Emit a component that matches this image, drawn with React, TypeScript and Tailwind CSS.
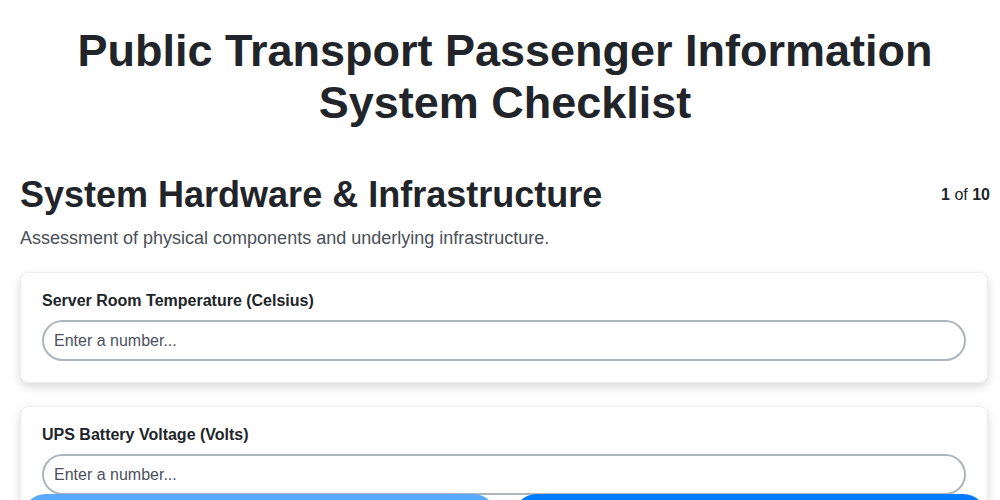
import React, { useState } from 'react';

interface Field {
  id: string;
  label: string;
}

const fields: Field[] = [
  { id: 'server-temp', label: 'Server Room Temperature (Celsius)' },
  { id: 'ups-voltage', label: 'UPS Battery Voltage (Volts)' },
];

const App: React.FC = () => {
  const [values, setValues] = useState<Record<string, string>>({});
  const step = 1;
  const total = 10;

  return (
    <div className="min-h-screen bg-white font-['Liberation_Sans',Arial,sans-serif] text-[#212529]">
      <div className="pl-5 pr-[10px] pt-[25px] pb-24">
        <h1 className="text-center text-[45px] font-bold leading-[52px]">
          Public Transport Passenger Information
          <br />
          System Checklist
        </h1>

        <div className="mt-[39px] flex items-center justify-between">
          <h2 className="text-[36px] font-bold">System Hardware &amp; Infrastructure</h2>
          <span className="text-base">
            <b>{step}</b> of <b>{total}</b>
          </span>
        </div>
        <p className="mt-[3px] text-[18px] text-[#495057]">
          Assessment of physical components and underlying infrastructure.
        </p>

        <div className="mt-5 mr-[2px] flex flex-col gap-[23px]">
          {fields.map(f => (
            <div
              key={f.id}
              className="rounded-lg border border-[#eceef1] bg-white px-[21px] pt-4 pb-[21px] shadow-[0_4px_10px_rgba(0,0,0,0.15)]"
            >
              <label htmlFor={f.id} className="block text-base font-bold text-[#212529]">
                {f.label}
              </label>
              <input
                id={f.id}
                type="number"
                placeholder="Enter a number..."
                value={values[f.id] ?? ''}
                onChange={e => setValues({ ...values, [f.id]: e.target.value })}
                className="mt-[7px] block h-[41px] w-full rounded-full border-2 border-[#adb5bd] px-[10px] text-base text-[#212529] placeholder:text-[#4b5060] focus:outline-none"
              />
            </div>
          ))}
        </div>
      </div>

      <div className="fixed inset-x-0 top-[494px] flex gap-4 pl-[22px] pr-[13px]">
        <button
          disabled
          className="h-12 flex-1 rounded-full bg-[#59a9ff] text-base font-bold text-white"
        >
          Previous
        </button>
        <button className="h-12 flex-1 rounded-full bg-[#007bff] text-base font-bold text-white">
          Next
        </button>
      </div>
    </div>
  );
};

export default App;
